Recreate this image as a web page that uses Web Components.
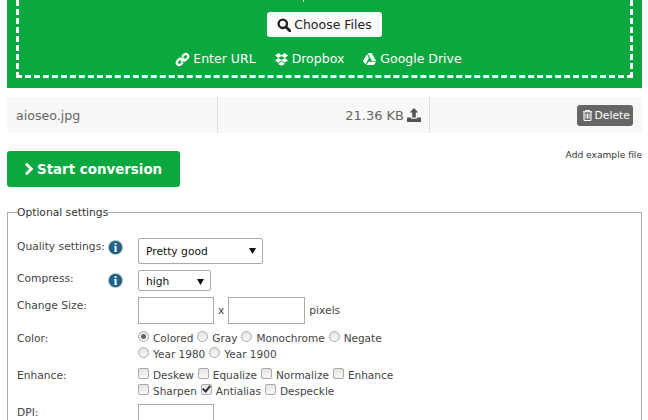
<!DOCTYPE html>
<html>
<head>
<meta charset="utf-8">
<style>
  html, body { margin: 0; padding: 0; background: #fff; overflow: hidden; height: 420px; }
  body { font-family: "DejaVu Sans", Verdana, sans-serif; }
</style>
</head>
<body>
<convert-page></convert-page>

<script>
const ICONS = {
  search: '<svg viewBox="0 0 14 14" width="14" height="14"><circle cx="5.8" cy="5.8" r="4.2" fill="none" stroke="currentColor" stroke-width="2.3"/><path d="M9 9l3.800 3.800" stroke="currentColor" stroke-width="2.800" stroke-linecap="round"/></svg>',
  link: '<svg viewBox="0 0 14 14" width="15" height="15"><g fill="none" stroke="currentColor" stroke-width="2.100" stroke-linecap="round"><path d="M6 8l2-2"/><path d="M7.200 3.800l1.300-1.300a2.400 2.400 0 0 1 3.200 0 2.400 2.400 0 0 1 0 3.200L10 7.400a2.400 2.400 0 0 1-3.200 0"/><path d="M6.800 10.200l-1.300 1.300a2.400 2.400 0 0 1-3.200 0 2.400 2.400 0 0 1 0-3.200L4 6.600a2.400 2.400 0 0 1 3.200 0"/></g></svg>',
  dropbox: '<svg viewBox="0 0 14 14" width="15" height="14" fill="currentColor"><path d="M4 1L.5 3.400 3.800 6 7 4 10.200 6l3.300-2.600L10 1 7 3.200z"/><path d="M3.800 6L.5 8.500 4 10.800l3-2.200 3 2.200 3.500-2.300L10.200 6 7 8z"/><path d="M4 11.500l3-2.100 3 2.100V12.300L7 13.800 4 12.300z"/></svg>',
  drive: '<svg viewBox="0 0 14 14" width="15" height="14" fill="currentColor"><path d="M5 1h4l4.700 8H9.500z"/><path d="M4.300 2.300L6.500 6 3 12.500.5 9z"/><path d="M4 13l2-3.300h7.500L11.500 13z"/></svg>',
  upload: '<svg viewBox="0 0 14 14" width="14" height="14" fill="currentColor"><path d="M7 0l4.300 4.600H8.800v5H5.200v-5H2.700z"/><path d="M0 9.500h4.200v1.200h5.600V9.500H14V14H0z"/></svg>',
  trash: '<svg viewBox="0 0 12 13" width="11" height="12" fill="none" stroke="currentColor"><path d="M1 3h10M4 3V1.500h4V3" stroke-width="1.100"/><path d="M2.200 3.200v8.300q0 1 1 1h5.600q1 0 1-1V3.200" stroke-width="1.200"/><path d="M4.300 5v5.500M6 5v5.500M7.700 5v5.500" stroke-width="1"/></svg>',
  chevron: '<svg viewBox="0 0 10 14" width="10" height="14"><path d="M2 1.800L7.300 7 2 12.200" fill="none" stroke="currentColor" stroke-width="2.800"/></svg>'
};

class ConvertPage extends HTMLElement {
  constructor() {
    super();
    this.attachShadow({ mode: 'open' });
    this.shadowRoot.innerHTML = `
      <style>
        :host { display: block; width: 648px; height: 420px; overflow: hidden;
                font-family: "DejaVu Sans", Verdana, sans-serif; }
        .actions { display: flex; justify-content: space-between; margin: 18px 6px 0 7px; height: 36px; }
        .example { font-size: 9.1px; line-height: 9px; color: #333; }
      </style>
      <drop-zone></drop-zone>
      <file-row name="aioseo.jpg" size="21.36 KB"></file-row>
      <div class="actions">
        <start-button>Start conversion</start-button>
        <span class="example">Add example file</span>
      </div>
      <settings-box></settings-box>
    `;
  }
}

class DropZone extends HTMLElement {
  constructor() {
    super();
    this.attachShadow({ mode: 'open' });
    this.shadowRoot.innerHTML = `
      <style>
        :host { display: block; margin: 0 6px 0 7px; height: 88px; background: #0aa83e; box-sizing: border-box;
                padding: 0 9px 10px 9px; overflow: hidden; color: #fff; }
        .dash { height: 78px; box-sizing: border-box; border: 3px dashed #fff; border-top: 0;
                display: flex; flex-direction: column; align-items: center; position: relative; }
        .tail { position: absolute; left: 284px; top: 0; width: 1px; height: 2px; background: #f5e9a8; }
        .choose { margin-top: 12px; height: 25px; box-sizing: border-box; width: 115px; background: #fafafa; color: #222;
                  border-radius: 3px; display: flex; align-items: center; justify-content: center; gap: 3px;
                  font-size: 12.5px; }
        .choose svg { display: block; }
        .links { display: flex; gap: 18px; margin-top: 14px; margin-right: 12px; font-size: 12.5px; line-height: 16px; }
        .links span { display: flex; align-items: center; gap: 3px; }
      </style>
      <div class="dash">
        <i class="tail"></i>
        <div class="choose">${ICONS.search}<span>Choose Files</span></div>
        <div class="links">
          <span>${ICONS.link}Enter URL</span>
          <span>${ICONS.dropbox}Dropbox</span>
          <span>${ICONS.drive}Google Drive</span>
        </div>
      </div>
    `;
  }
}

class FileRow extends HTMLElement {
  constructor() {
    super();
    this.attachShadow({ mode: 'open' });
    const name = this.getAttribute('name') || '';
    const size = this.getAttribute('size') || '';
    this.shadowRoot.innerHTML = `
      <style>
        :host { display: grid; grid-template-columns: 211px 212px 1fr; margin: 9px 6px 0 7px; height: 36px;
                background: #f8f8f8; border-radius: 3px; color: #666; font-size: 12.6px; }
        .cell { display: flex; align-items: center; }
        .name { padding-left: 9px; border-right: 1px solid #ddd; }
        .size { justify-content: flex-end; padding-right: 8px; gap: 3px; border-right: 1px solid #ddd; font-size: 13px; }
        .size svg { color: #555; }
        .del { justify-content: flex-end; padding-right: 9px; }
        .del span { display: flex; align-items: center; gap: 2px; height: 21px; padding: 0 3px 0 5px; background: #666;
                    color: #fff; border-radius: 3px; font-size: 10.8px; }
      </style>
      <div class="cell name">${name}</div>
      <div class="cell size">${size}${ICONS.upload}</div>
      <div class="cell del"><span>${ICONS.trash}Delete</span></div>
    `;
  }
}

class StartButton extends HTMLElement {
  constructor() {
    super();
    this.attachShadow({ mode: 'open' });
    this.shadowRoot.innerHTML = `
      <style>
        :host { display: flex; align-items: center; gap: 3px; box-sizing: border-box; width: 173px; height: 36px;
                padding-left: 17px; background: #0aa83e; color: #fff; border-radius: 3px;
                font-size: 13.4px; font-weight: bold; }
      </style>
      ${ICONS.chevron}<slot></slot>
    `;
  }
}

class InfoDot extends HTMLElement {
  constructor() {
    super();
    this.attachShadow({ mode: 'open' });
    this.shadowRoot.innerHTML = `
      <style>
        :host { display: inline-flex; box-sizing: border-box; width: 15px; height: 15px; align-items: center; justify-content: center;
                border-radius: 50%; background: radial-gradient(circle at 50% 40%, #2a6f96, #15506f); color: #fff;
                border: 1px solid #a9bcc8; font: bold 12px/1 "Liberation Serif", serif; }
      </style>i
    `;
  }
}

class SelectBox extends HTMLElement {
  constructor() {
    super();
    this.attachShadow({ mode: 'open' });
    this.shadowRoot.innerHTML = `
      <style>
        :host { display: flex; align-items: center; justify-content: space-between; box-sizing: border-box;
                padding: 0 6px 0 7px; background: #fff; border: 1px solid #aaa; border-radius: 2px;
                color: #111; font-size: 10.7px; }
        svg { display: block; }
      </style>
      <slot></slot>
      <svg viewBox="0 0 7 6" width="7" height="6"><path d="M0 0h7L3.500 6z" fill="#111"/></svg>
    `;
  }
}

class SettingsBox extends HTMLElement {
  constructor() {
    super();
    this.attachShadow({ mode: 'open' });
    const radio = (label, on) => `<label><input type="radio" name="color" ${on ? 'checked' : ''}><span>${label}</span></label>`;
    const check = (label, on) => `<label><input type="checkbox" ${on ? 'checked' : ''}><span>${label}</span></label>`;
    this.shadowRoot.innerHTML = `
      <style>
        :host { display: block; margin: 19px 6px 0 7px; color: #444; font-size: 10.7px; }
        fieldset { margin: 0; padding: 19px 9px 0 9px; border: 1px solid #aaa; height: 260px; box-sizing: border-box; }
        legend { padding: 0; color: #333; margin-left: 0; }
        .row { display: grid; grid-template-columns: 121px 1fr; }
        .lab { display: flex; align-items: flex-start; justify-content: space-between; padding: 2px 15px 0 0; white-space: nowrap; }
        .q { width: 125px; height: 26px; }
        .c { width: 73px; height: 21px; padding-top: 2px; }
        input[type=text] { box-sizing: border-box; width: 76px; height: 27px; border: 1px solid #aaa; margin: 0; padding: 0; display: block; }
        .size { display: flex; align-items: flex-start; gap: 4px; line-height: 27px; }
        .opts { font-size: 10.5px; }
        .opts div { display: flex; height: 16px; align-items: center; gap: 4px; }
        label { display: inline-flex; align-items: center; white-space: nowrap; }
        input[type=radio], input[type=checkbox] {
          appearance: none; -webkit-appearance: none; box-sizing: border-box; margin: 0 4px 0 0; width: 11px; height: 11px;
          border: 1px solid #aaa; background: linear-gradient(#e4e4e4, #f8f8f8); position: relative; top: -2px; display: grid; place-items: center;
        }
        input[type=radio] { border-radius: 50%; }
        input[type=checkbox] { border-radius: 2px; }
        input[type=radio]:checked::after { content: ""; width: 5px; height: 5px; border-radius: 50%; background: #666; }
        input[type=checkbox]:checked::after { content: ""; width: 3px; height: 6px; margin-top: -2px; border: solid #333; border-width: 0 2px 2px 0; transform: rotate(40deg); }
      </style>
      <fieldset>
        <legend>Optional settings</legend>
        <div class="row" style="height:32px">
          <div class="lab"><span>Quality settings:</span><info-dot></info-dot></div>
          <select-box class="q">Pretty good</select-box>
        </div>
        <div class="row" style="height:27px">
          <div class="lab"><span>Compress:</span><info-dot style="margin-top:1px"></info-dot></div>
          <select-box class="c">high</select-box>
        </div>
        <div class="row" style="height:33px">
          <div class="lab"><span>Change Size:</span></div>
          <div class="size"><input type="text"><span>x</span><input type="text" style="width:77px"><span>pixels</span></div>
        </div>
        <div class="row" style="height:37px">
          <div class="lab"><span>Color:</span></div>
          <div class="opts">
            <div>${radio('Colored', true)}${radio('Gray')}${radio('Monochrome')}${radio('Negate')}</div>
            <div>${radio('Year 1980')}${radio('Year 1900')}</div>
          </div>
        </div>
        <div class="row" style="height:37px">
          <div class="lab"><span>Enhance:</span></div>
          <div class="opts">
            <div>${check('Deskew')}${check('Equalize')}${check('Normalize')}${check('Enhance')}</div>
            <div>${check('Sharpen')}${check('Antialias', true)}${check('Despeckle')}</div>
          </div>
        </div>
        <div class="row">
          <div class="lab"><span>DPI:</span></div>
          <div><input type="text"></div>
        </div>
      </fieldset>
    `;
  }
}

customElements.define('info-dot', InfoDot);
customElements.define('select-box', SelectBox);
customElements.define('drop-zone', DropZone);
customElements.define('file-row', FileRow);
customElements.define('start-button', StartButton);
customElements.define('settings-box', SettingsBox);
customElements.define('convert-page', ConvertPage);
</script>
</body>
</html>
